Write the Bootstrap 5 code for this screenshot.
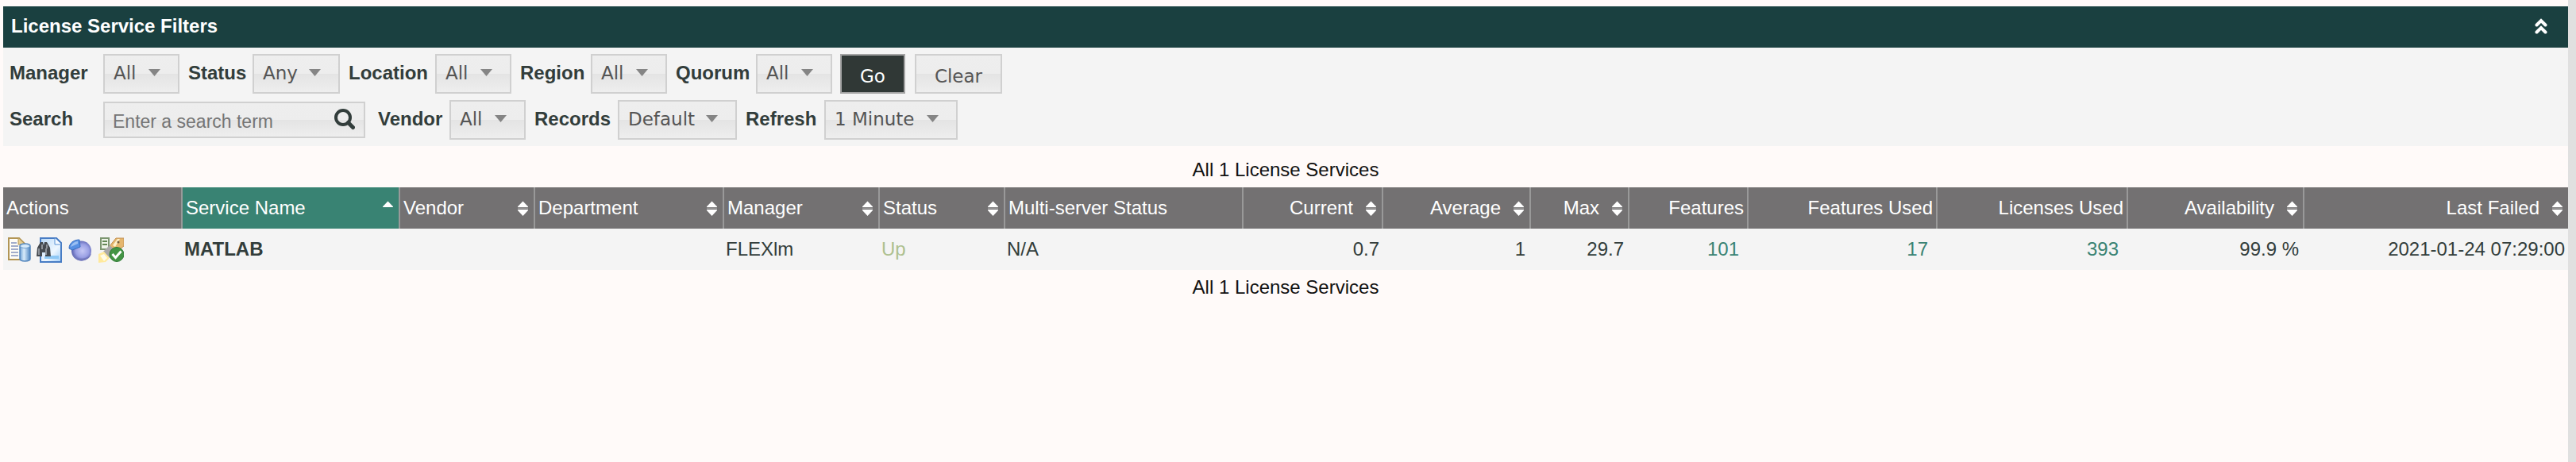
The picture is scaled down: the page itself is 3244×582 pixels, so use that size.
<!DOCTYPE html>
<html lang="en">
<head>
<meta charset="utf-8">
<title>License Services</title>
<link href="https://cdn.jsdelivr.net/npm/bootstrap@5.3.0/dist/css/bootstrap.min.css" rel="stylesheet">
<style>
body{background:#fffaf9;color:#111;font:24px/28px "Liberation Sans",Arial,sans-serif;min-height:582px;overflow:hidden}
.page-edge{border-right:10px solid #e0e0e0;min-height:582px;padding:8px 0 0 4px}
.panel-head{background:#1a4040;color:#fff;height:52px;padding:0 26px 2px 10px}
.panel-head h1{font-size:24px;line-height:28px;font-weight:700}
.filters{background:#f4f4f4;height:124px;padding-top:8px}
.filter-row{display:grid;height:50px;margin-bottom:8px;align-items:center}
.row-a{grid-template-columns:126px 96px 92px 110px 120px 96px 100px 96px 112px 96px 10px 82px 12px 110px}
.row-b{grid-template-columns:126px 330px 106px 96px 116px 150px 110px 168px}
.filter-row label{font-weight:700;color:#323d3b;padding:0 0 2px 11px;white-space:nowrap}
.filter-row label:first-child{padding-left:8px}
.ctl{border:2px solid #d0d0d0;border-radius:0;background:linear-gradient(#eee 0,#ededed 49%,#e4e4e4 51%,#eee 100%);color:#555;height:50px;font:23px/28px "DejaVu Sans",Verdana,sans-serif;padding:0 22px 3px 11px;white-space:nowrap}
.btn.ctl{padding:5px 0 0}
.btn.go{background:#303836;border-color:#a3a3a3;color:#fff}
.search-box{height:46px;padding:0 11px 0 10px;font-family:"Liberation Sans",Arial,sans-serif}
.search-box input{font-size:23px;line-height:28px;color:#757575;min-width:0;margin-top:3px}
.search-box svg{flex:none;margin-top:-2px}
.search-box input::placeholder{color:#757575;opacity:1}
.count{height:52px;line-height:28px;text-align:center;padding-top:16px}
.services{table-layout:fixed;width:3230px;margin:0;border-collapse:separate;border-spacing:0}
.services th{background:#737172;color:#fff;font-weight:400;height:52px;padding:0 4px;border-right:2px solid #999;line-height:28px;vertical-align:middle;white-space:nowrap}
.services th:last-child{border-right:0}
.services th.sorted{background:#398373}
.services td{background:#f4f4f4;color:#323d3b;height:52px;padding:0 5px 0 2px;line-height:28px;vertical-align:middle;white-space:nowrap}
.services td:last-child{padding-right:4px}
.services td.inset{padding-right:7px}
.services td.linked{padding-right:12px;color:#398373}
.services td.up{color:#adc08f}
.services .sort{width:13px;height:20px;margin:5px 3px 0 16px;flex:none}
.actions svg{display:block;width:32px;height:32px}
.services td.actions{padding:2px 0 0 4px}
.gap-s{margin-right:6px}
.gap-l{margin-right:8px}
</style>
</head>
<body>
<svg width="0" height="0" class="position-absolute">
<defs>
<linearGradient id="blue" x1="0" x2="1"><stop stop-color="#6c9fd4"/><stop offset=".4" stop-color="#d8ebfa"/><stop offset="1" stop-color="#4d85c2"/></linearGradient>
<linearGradient id="sheet" x2="1" y2="1"><stop stop-color="#b9d9f8"/><stop offset=".6" stop-color="#eef7ff"/><stop offset="1" stop-color="#9fcdf8"/></linearGradient>
<radialGradient id="ball" cx=".55" cy=".5" r=".55"><stop stop-color="#c5c8f5"/><stop offset=".6" stop-color="#9aa0e4"/><stop offset="1" stop-color="#565dac"/></radialGradient>
<symbol id="both" viewBox="0 0 13 20"><path fill="#fff" d="M6.500.5 13 7.200V8H0V7.200zM0 11h13v1L6.500 19 0 12z"/><path fill="#aaa" d="M0 8.700h13v1H0z"/></symbol>
<symbol id="asc" viewBox="0 0 13 20"><path fill="#fff" d="M6.500.5 13 7.200V8H0V7.200z"/></symbol>
<symbol id="caret" viewBox="0 0 15 9"><path fill="#858585" d="M0 0h15L7.500 9z"/></symbol>
</defs>
</svg>
<main class="page-edge">
<header class="panel-head d-flex align-items-center justify-content-between">
<h1 class="m-0">License Service Filters</h1>
<svg width="16" height="20" viewBox="0 0 16 20" fill="none" stroke="#fff" stroke-width="4" stroke-linecap="round"><path d="m2.500 8.500 5.500-5.500 5.500 5.500M2.500 17.500 8 12l5.500 5.500"/></svg>
</header>
<form class="filters">
<div class="filter-row row-a">
<label>Manager</label><div class="ctl d-flex align-items-center justify-content-between">All<svg width="15" height="9"><use href="#caret"/></svg></div>
<label>Status</label><div class="ctl d-flex align-items-center justify-content-between">Any<svg width="15" height="9"><use href="#caret"/></svg></div>
<label>Location</label><div class="ctl d-flex align-items-center justify-content-between">All<svg width="15" height="9"><use href="#caret"/></svg></div>
<label>Region</label><div class="ctl d-flex align-items-center justify-content-between">All<svg width="15" height="9"><use href="#caret"/></svg></div>
<label>Quorum</label><div class="ctl d-flex align-items-center justify-content-between">All<svg width="15" height="9"><use href="#caret"/></svg></div>
<span></span><button type="button" class="btn ctl go">Go</button>
<span></span><button type="button" class="btn ctl">Clear</button>
</div>
<div class="filter-row row-b">
<label>Search</label>
<div class="ctl search-box d-flex align-items-center"><input class="border-0 bg-transparent p-0 flex-grow-1" type="text" placeholder="Enter a search term" aria-label="Search"><svg width="27" height="27" viewBox="0 0 27 27" fill="none" stroke="#323d3b"><circle cx="12" cy="11" r="9" stroke-width="4"/><path d="m18.500 17.500 6 6" stroke-width="5" stroke-linecap="round"/></svg></div>
<label class="ps-3">Vendor</label><div class="ctl d-flex align-items-center justify-content-between">All<svg width="15" height="9"><use href="#caret"/></svg></div>
<label>Records</label><div class="ctl d-flex align-items-center justify-content-between">Default<svg width="15" height="9"><use href="#caret"/></svg></div>
<label>Refresh</label><div class="ctl d-flex align-items-center justify-content-between">1 Minute<svg width="15" height="9"><use href="#caret"/></svg></div>
</div>
</form>
<div class="count">All 1 License Services</div>
<table class="services">
<colgroup><col width="226"><col width="274"><col width="170"><col width="238"><col width="196"><col width="158"><col width="300"><col width="176"><col width="186"><col width="124"><col width="150"><col width="238"><col width="240"><col width="222"><col width="332"></colgroup>
<thead><tr>
<th>Actions</th>
<th class="sorted"><div class="d-flex justify-content-between">Service Name<svg class="sort"><use href="#asc"/></svg></div></th>
<th><div class="d-flex justify-content-between">Vendor<svg class="sort"><use href="#both"/></svg></div></th>
<th><div class="d-flex justify-content-between">Department<svg class="sort"><use href="#both"/></svg></div></th>
<th><div class="d-flex justify-content-between">Manager<svg class="sort"><use href="#both"/></svg></div></th>
<th><div class="d-flex justify-content-between">Status<svg class="sort"><use href="#both"/></svg></div></th>
<th>Multi-server Status</th>
<th><div class="d-flex justify-content-end">Current<svg class="sort"><use href="#both"/></svg></div></th>
<th><div class="d-flex justify-content-end">Average<svg class="sort"><use href="#both"/></svg></div></th>
<th><div class="d-flex justify-content-end">Max<svg class="sort"><use href="#both"/></svg></div></th>
<th class="text-end">Features</th>
<th class="text-end">Features Used</th>
<th class="text-end">Licenses Used</th>
<th><div class="d-flex justify-content-end">Availability<svg class="sort"><use href="#both"/></svg></div></th>
<th><div class="d-flex justify-content-end">Last Failed<svg class="sort"><use href="#both"/></svg></div></th>
</tr></thead>
<tbody><tr>
<td class="actions"><div class="d-flex">
<svg class="gap-s" viewBox="0 0 32 32"><path fill="#fffdf6" stroke="#b29555" stroke-width="2" d="M3 1h13l7 7v20H3z"/><path fill="#e8cf92" stroke="#b29555" d="M15 1v8h8"/><path stroke="#8492bd" stroke-width="1.600" d="M6 7h7M6 11h9M6 15h9M6 19h9M6 23h9"/><path fill="url(#blue)" stroke="#5487bd" stroke-width="1.500" d="M17 11c0-4 13-4 13 0v16c0 4-13 4-13 0z"/><ellipse cx="23.500" cy="11" rx="6" ry="2.500" fill="#d5eafa" stroke="#6a9bcb"/></svg>
<svg class="gap-l" viewBox="0 0 32 32"><path fill="url(#sheet)" stroke="#477cc4" stroke-width="2" d="M5 1h20l6 6v24H5z"/><path fill="#f5faff" stroke="#5b93d6" d="M23 1v8h8"/><path fill="#8ec8f5" d="M15 23h13v4H10v-3z"/><path fill="#454a50" d="M1 13l4-7h3l1 4 1-4h3l4 7 1 11h-7v-5H7v5H0z"/><path stroke="#a7acb3" stroke-width="1.500" d="M3 14v8M7 9v6M12 14v8M13 9v5"/></svg>
<svg class="gap-s" viewBox="0 0 32 32"><ellipse cx="16.500" cy="17" rx="12.500" ry="12.500" fill="url(#ball)"/><path fill="#7379bd" d="M5 20c2 13 22 12 24 0-4 8-19 10-24 0z"/><path fill="#5790e3" stroke="#386ebf" d="M1 14C1 7 7 3 14 3l1 9-10 4z"/><path fill="#9abff2" d="M3 12c1-4 5-7 9-7v3z"/></svg>
<svg viewBox="0 0 32 32"><path fill="#edf3e8" stroke="#7c9670" stroke-width="2" d="M3 1h10v14H3z"/><path stroke="#638754" stroke-width="2" d="M5 5h6M5 9h6"/><path fill="#e5b66e" stroke="#c39257" d="m14 11 8-10h10v10l-9 7z"/><path fill="#fff1cb" d="m18 10 6-8h3l-6 10z"/><circle cx="25" cy="6" r="1.500" fill="#725c3b"/><path fill="#a9a8a9" d="m6 18 8-8 9 8-9 8z"/><path fill="#ffe99c" d="m0 21 7-3 7 8-5 5-9 1z"/><path fill="#fffbe8" d="m2 23 5-2 4 5-4 4z"/><circle cx="23" cy="21.500" r="9" fill="#439444" stroke="#307b36"/><path fill="none" stroke="#fff" stroke-width="3" d="m17.500 21 4 4.500 7-8"/></svg>
</div></td>
<td class="fw-bold">MATLAB</td><td></td><td></td><td>FLEXlm</td><td class="up">Up</td><td>N/A</td>
<td class="text-end">0.7</td><td class="text-end inset">1</td><td class="text-end inset">29.7</td>
<td class="text-end linked">101</td><td class="text-end linked">17</td><td class="text-end linked">393</td>
<td class="text-end inset">99.9 %</td><td class="text-end">2021-01-24 07:29:00</td>
</tr></tbody>
</table>
<div class="count pt-2">All 1 License Services</div>
</main>
<script src="https://cdn.jsdelivr.net/npm/bootstrap@5.3.0/dist/js/bootstrap.bundle.min.js"></script>
</body>
</html>
